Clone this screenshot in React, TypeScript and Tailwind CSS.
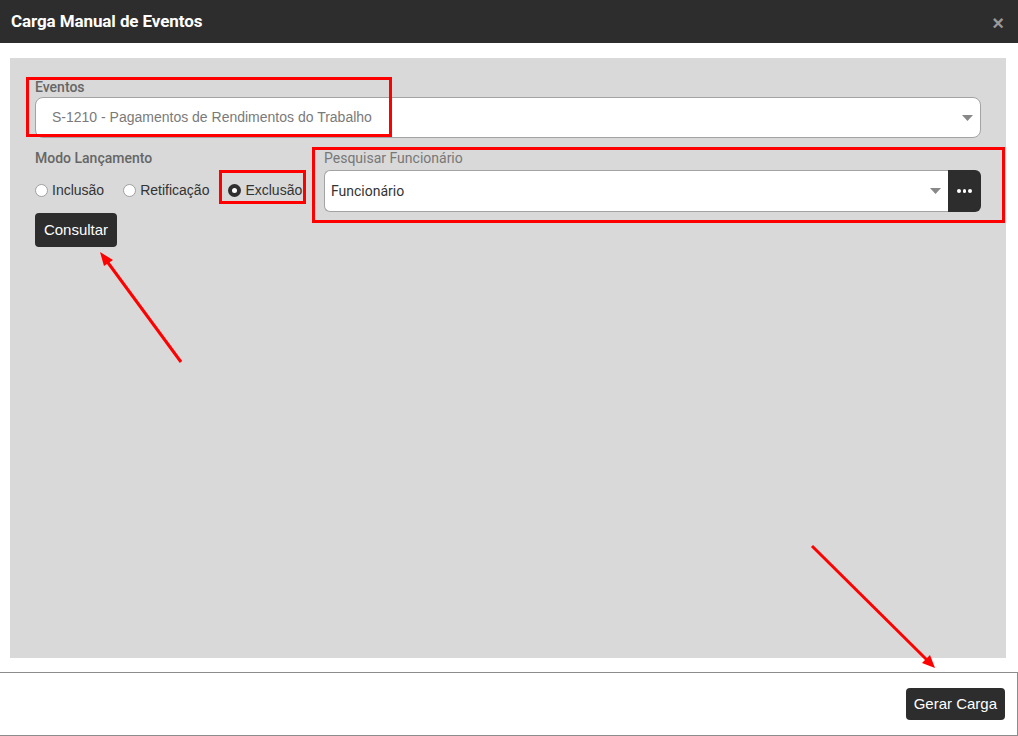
import React from 'react';

const arial = { fontFamily: '"Liberation Sans", Arial, sans-serif' };
const roboto = { fontFamily: 'Roboto, "Liberation Sans", sans-serif' };

const Caret = () => (
  <svg width="11" height="6" viewBox="0 0 11 6" className="shrink-0">
    <path d="M0 0 H11 L5.5 6 Z" fill="#888" />
  </svg>
);

const Radio = ({ label, checked }: { label: string; checked?: boolean }) => (
  <label className="flex items-center cursor-pointer" style={arial}>
    {checked ? (
      <span className="w-[13px] h-[13px] rounded-full bg-[#2f2f2f] flex items-center justify-center">
        <span className="w-[5px] h-[5px] rounded-full bg-white" />
      </span>
    ) : (
      <span className="w-[13px] h-[13px] rounded-full bg-white border border-[#a0a0a0]" />
    )}
    <span className="ml-[4px] text-[14px] text-[#333]">{label}</span>
  </label>
);

export default function App() {
  return (
    <div className="relative w-[1018px] h-[736px] bg-white overflow-hidden" style={roboto}>
      {/* Header */}
      <div className="h-[43px] bg-[#2d2d2d] flex items-center justify-between pl-[11px] pr-[14px]">
        <h1 className="text-white font-bold text-[17px] tracking-[-0.1px]">Carga Manual de Eventos</h1>
        <span className="text-[#9a9a9a] font-bold text-[20px] leading-none mt-[2px]" style={arial}>×</span>
      </div>

      {/* Body */}
      <div className="ml-[10px] mr-[12px] mt-[15px] h-[600px] bg-[#d9d9d9] px-[25px] pt-[20px]">
        <div className="text-[14px] font-medium text-[#666] leading-[19px]">Eventos</div>
        <div className="h-[41px] bg-white border border-[#a3a3a3] rounded-[8px] flex items-center justify-between pl-[16px] pr-[7px]">
          <span className="text-[14px] text-[#7a7a7a]" style={arial}>S-1210 - Pagamentos de Rendimentos do Trabalho</span>
          <Caret />
        </div>

        <div className="flex mt-[12px]">
          <div className="w-[289px] shrink-0">
            <div className="text-[14px] font-medium text-[#666] leading-[17px]">Modo Lançamento</div>
            <div className="flex items-center gap-[19px] h-[20px] mt-[13px]">
              <Radio label="Inclusão" />
              <Radio label="Retificação" />
              <Radio label="Exclusão" checked />
            </div>
            <button className="mt-[13px] h-[34px] w-[82px] bg-[#2d2d2d] text-white text-[15px] rounded-[4px]" style={arial}>
              Consultar
            </button>
          </div>

          <div className="flex-1">
            <div className="text-[14px] text-[#777] leading-[17px]">Pesquisar Funcionário</div>
            <div className="flex mt-[3px] h-[42px]">
              <div className="flex-1 bg-white border border-[#a3a3a3] border-r-0 rounded-l-[6px] flex items-center justify-between pl-[6px] pr-[7px]">
                <span className="text-[14px] text-[#333]">Funcionário</span>
                <Caret />
              </div>
              <button className="w-[33px] bg-[#2d2d2d] rounded-r-[6px] flex items-center justify-center gap-[2px]">
                <span className="w-[3.5px] h-[3.5px] rounded-full bg-white" />
                <span className="w-[3.5px] h-[3.5px] rounded-full bg-white" />
                <span className="w-[3.5px] h-[3.5px] rounded-full bg-white" />
              </button>
            </div>
          </div>
        </div>
      </div>

      {/* Footer */}
      <div className="mt-[14px] h-[64px] border-t border-r border-b border-[#8c8c8c] flex items-start justify-end pt-[15px] pr-[12px]">
        <button className="h-[32px] px-[8px] bg-[#2d2d2d] text-white text-[15px] rounded-[4px]" style={arial}>
          Gerar Carga
        </button>
      </div>

      {/* Annotations */}
      <div className="absolute left-[26px] top-[77px] w-[366px] h-[60px] border-[3px] border-[#ff0000] pointer-events-none" />
      <div className="absolute left-[219px] top-[170px] w-[87px] h-[34px] border-[3px] border-[#ff0000] pointer-events-none" />
      <div className="absolute left-[312px] top-[147px] w-[693px] h-[76px] border-[3px] border-[#ff0000] pointer-events-none" />
      <svg className="absolute inset-0 pointer-events-none" width="1018" height="736">
        <line x1="181" y1="362" x2="106" y2="260" stroke="#ff0000" strokeWidth="3" />
        <polygon points="100,252 113,260 104,266" fill="#ff0000" />
        <line x1="812" y1="546" x2="928" y2="661" stroke="#ff0000" strokeWidth="3" />
        <polygon points="935,668 922,663 930,655" fill="#ff0000" />
      </svg>
    </div>
  );
}
